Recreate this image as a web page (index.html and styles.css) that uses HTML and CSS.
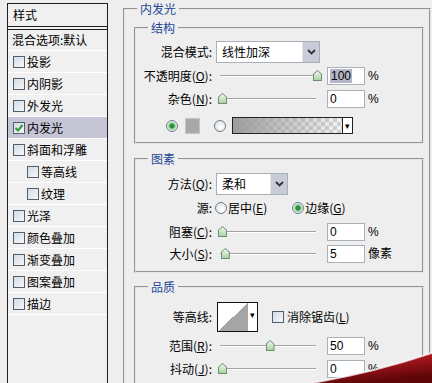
FILE: index.html
```html
<!DOCTYPE html>
<html lang="zh-CN">
<head>
    <meta charset="UTF-8">
    <title>图层样式 - 内发光</title>
    <link rel="stylesheet" href="styles.css">
</head>
<body>
    <div class="dialog">
        <div class="styles">
            <div class="styles-head">样式</div>
            <div class="styles-blend">混合选项:默认</div>
            <ul class="styles-list">
                <li><span class="cb"></span>投影</li>
                <li><span class="cb"></span>内阴影</li>
                <li><span class="cb"></span>外发光</li>
                <li class="on"><span class="cb"><svg class="tick" width="10" height="10" viewBox="0 0 10 10"><path d="M1.5 5 L4 7.5 L8.5 2" fill="none" stroke="#2f9a3c" stroke-width="2"/></svg></span>内发光</li>
                <li><span class="cb"></span>斜面和浮雕</li>
                <li class="sub"><span class="cb"></span>等高线</li>
                <li class="sub"><span class="cb"></span>纹理</li>
                <li><span class="cb"></span>光泽</li>
                <li><span class="cb"></span>颜色叠加</li>
                <li><span class="cb"></span>渐变叠加</li>
                <li><span class="cb"></span>图案叠加</li>
                <li><span class="cb"></span>描边</li>
            </ul>
        </div>

        <fieldset class="group outer">
            <legend>内发光</legend>

            <fieldset class="group inner g-struct">
                <legend>结构</legend>
                <div class="row r-mode">
                    <span class="lbl">混合模式:</span>
                    <div class="select w-mode"><span class="sel-text">线性加深</span><span class="drop"><svg width="9" height="6" viewBox="0 0 9 6"><path d="M1 1 L4.5 4.5 L8 1" fill="none" stroke="#333" stroke-width="1.8"/></svg></span></div>
                </div>
                <div class="row r-opacity">
                    <span class="lbl">不透明度(<u>O</u>):</span>
                    <div class="slider"><span class="thumb" style="--v:100"></span></div>
                    <div class="num"><span class="hl">100</span></div>
                    <span class="unit">%</span>
                </div>
                <div class="row r-noise">
                    <span class="lbl">杂色(<u>N</u>):</span>
                    <div class="slider"><span class="thumb" style="--v:0"></span></div>
                    <div class="num">0</div>
                    <span class="unit">%</span>
                </div>
                <div class="row r-color">
                    <span class="radio checked"></span>
                    <span class="swatch"></span>
                    <span class="radio r-second"></span>
                    <div class="gradient"><span class="grad-fill"></span><span class="grad-drop">&#9662;</span></div>
                </div>
            </fieldset>

            <fieldset class="group inner g-elem">
                <legend>图素</legend>
                <div class="row r-method">
                    <span class="lbl">方法(<u>Q</u>):</span>
                    <div class="select w-method"><span class="sel-text">柔和</span><span class="drop"><svg width="9" height="6" viewBox="0 0 9 6"><path d="M1 1 L4.5 4.5 L8 1" fill="none" stroke="#333" stroke-width="1.8"/></svg></span></div>
                </div>
                <div class="row r-source">
                    <span class="lbl">源:</span>
                    <span class="radio"></span>
                    <span class="opt">居中(<u>E</u>)</span>
                    <span class="radio checked r-edge"></span>
                    <span class="opt">边缘(<u>G</u>)</span>
                </div>
                <div class="row r-choke">
                    <span class="lbl">阻塞(<u>C</u>):</span>
                    <div class="slider"><span class="thumb" style="--v:0"></span></div>
                    <div class="num">0</div>
                    <span class="unit">%</span>
                </div>
                <div class="row r-size">
                    <span class="lbl">大小(<u>S</u>):</span>
                    <div class="slider"><span class="thumb" style="--v:3"></span></div>
                    <div class="num">5</div>
                    <span class="unit">像素</span>
                </div>
            </fieldset>

            <fieldset class="group inner g-quality">
                <legend>品质</legend>
                <div class="row r-contour">
                    <span class="lbl">等高线:</span>
                    <div class="contour"><span class="curve"></span><span class="contour-drop">&#9662;</span></div>
                    <span class="cb cb-aa"></span>
                    <span class="opt">消除锯齿(<u>L</u>)</span>
                </div>
                <div class="row r-range">
                    <span class="lbl">范围(<u>R</u>):</span>
                    <div class="slider"><span class="thumb" style="--v:50"></span></div>
                    <div class="num">50</div>
                    <span class="unit">%</span>
                </div>
                <div class="row r-jitter">
                    <span class="lbl">抖动(<u>J</u>):</span>
                    <div class="slider"><span class="thumb" style="--v:0"></span></div>
                    <div class="num">0</div>
                    <span class="unit">%</span>
                </div>
            </fieldset>
        </fieldset>

        <svg class="swoosh" width="120" height="40" viewBox="0 0 120 40">
            <defs>
                <linearGradient id="red" x1="0" y1="0" x2="0.4" y2="1">
                    <stop offset="0" stop-color="#c4232a"/>
                    <stop offset="0.5" stop-color="#a0141a"/>
                    <stop offset="1" stop-color="#5e0608"/>
                </linearGradient>
            </defs>
            <path d="M0 40 Q 60 30 120 10 L120 40 Z" fill="url(#red)"/>
            <path d="M0 40 Q 60 30 120 10" fill="none" stroke="#fff" stroke-opacity="0.7" stroke-width="2"/>
        </svg>
    </div>
</body>
</html>
```

FILE: styles.css
```css
body {
    margin: 0;
    background: #eeeeee;
    font-family: "Noto Sans CJK SC", "Noto Sans", sans-serif;
    font-size: 12px;
    line-height: 16px;
    color: #000;
    overflow: hidden;
}

.dialog {
    position: relative;
    display: flex;
    align-items: flex-start;
    width: 432px;
    height: 383px;
    overflow: hidden;
}

/* left list of styles */
.styles {
    flex: none;
    width: 99px;
    height: 400px;
    margin: 3px 0 0 7px;
    border: 1px solid #1e1e1e;
    border-bottom: 0;
    background: #f0f0f0;
}

.styles-head {
    height: 22px;
    line-height: 22px;
    padding-left: 5px;
    border-bottom: 1px solid #1e1e1e;
}

.styles-blend {
    height: 20px;
    line-height: 20px;
    margin-top: 2px;
    padding-left: 4px;
    border-top: 1px solid #1e1e1e;
    border-bottom: 1px solid #fff;
}

.styles-list {
    list-style: none;
    margin: 0;
    padding: 0;
}

.styles-list li {
    display: flex;
    align-items: center;
    gap: 2px;
    height: 21px;
    padding-left: 5px;
    border-bottom: 1px solid #fff;
}

.styles-list li.sub {
    padding-left: 19px;
}

.styles-list li.on {
    background: #c5c5d5;
}

.cb {
    flex: none;
    position: relative;
    width: 10px;
    height: 10px;
    border: 1px solid #4f5f70;
    background: linear-gradient(135deg, #d2dbe4, #f6f8fa);
}

.cb .tick {
    position: absolute;
    left: 0;
    top: 0;
}

/* group boxes */
.group {
    margin: 0;
    padding: 0;
    min-width: 0;
    border: 2px groove #e6e6e6;
}

.group legend {
    margin-left: 12px;
    padding: 0 3px;
    color: #1d4796;
    line-height: 16px;
}

.outer {
    flex: none;
    width: 304px;
    height: 420px;
    margin: 1px 0 0 15px;
}

.inner {
    width: 286px;
    margin: 3px 0 0 9px;
    padding-bottom: 8px;
}

.g-elem {
    margin-top: 7px;
}

.g-quality {
    margin-top: 6px;
    padding-bottom: 20px;
}

/* rows */
.row {
    display: flex;
    align-items: center;
    height: 18px;
}

.lbl {
    flex: none;
    width: 76px;
    margin-right: 4px;
    text-align: right;
    white-space: nowrap;
}

.r-mode { height: 22px; margin-top: 5px; }
.r-opacity { margin-top: 4px; }
.r-noise { margin-top: 5px; }
.r-color { height: 17px; margin-top: 9px; }

.r-method { height: 22px; margin-top: 6px; }
.r-source { height: 16px; margin-top: 5px; }
.r-choke { margin-top: 7px; }
.r-size { margin-top: 4px; }

.r-contour { height: 30px; margin-top: 7px; }
.r-range { margin-top: 5px; }
.r-jitter { margin-top: 5px; }

/* dropdown */
.select {
    flex: none;
    display: flex;
    height: 22px;
    box-sizing: border-box;
    border: 1px solid #a9b0ba;
    background: #fff;
}

.w-mode { width: 104px; }
.w-method { width: 72px; }

.sel-text {
    padding-left: 5px;
    line-height: 20px;
}

.drop {
    display: flex;
    align-items: center;
    justify-content: center;
    width: 16px;
    margin-left: auto;
    background: #c8cbd8;
    border-left: 1px solid #e4e6ee;
}

/* slider */
.slider {
    flex: none;
    position: relative;
    width: 106px;
    height: 18px;
}

.slider::before {
    content: "";
    position: absolute;
    left: 4px;
    right: 6px;
    top: 8px;
    border-top: 1px solid #a2a2a2;
    border-bottom: 1px solid #fff;
}

.thumb {
    position: absolute;
    top: 3px;
    left: calc(2px + var(--v) * 0.95px);
    width: 9px;
    height: 11px;
    background: linear-gradient(#6f8f72, #6f8f72);
    clip-path: polygon(50% 0, 100% 36%, 100% 100%, 0 100%, 0 36%);
}

.thumb::after {
    content: "";
    position: absolute;
    left: 1px;
    top: 1px;
    width: 7px;
    height: 9px;
    background: linear-gradient(#f2f8ef, #a9d3a4);
    clip-path: polygon(50% 0, 100% 35%, 100% 100%, 0 100%, 0 35%);
}

/* number fields */
.num {
    flex: none;
    width: 38px;
    height: 18px;
    box-sizing: border-box;
    margin-left: 5px;
    padding-left: 2px;
    border: 1px solid #a9b0ba;
    background: #fff;
    font-family: "Liberation Sans", Arial, sans-serif;
    font-size: 12px;
    line-height: 16px;
}

.num .hl {
    background: #b4b6c8;
    padding: 0 1px;
}

.unit {
    margin-left: 3px;
    font-family: "Liberation Sans", "Noto Sans CJK SC", sans-serif;
}

/* radios and colour row */
.radio {
    flex: none;
    width: 12px;
    height: 12px;
    box-sizing: border-box;
    border: 1px solid #6f7d8b;
    border-radius: 50%;
    background: radial-gradient(circle at 60% 60%, #fff, #d6dee4);
}

.radio.checked {
    background: radial-gradient(circle, #2f8d3e 0 2px, #8fd09a 3px, #eef4ef 5px);
}

.r-color .radio {
    margin-left: 30px;
}

.r-color .r-second {
    margin-left: 14px;
}

.swatch {
    flex: none;
    width: 15px;
    height: 16px;
    margin-left: 7px;
    box-sizing: border-box;
    border: 1px solid #c4c4c4;
    background: #a8a8a8;
}

.gradient {
    flex: none;
    display: flex;
    width: 121px;
    height: 17px;
    margin-left: 6px;
    box-sizing: border-box;
    border: 1px solid #222;
    background: #fff;
}

.grad-fill {
    flex: 1;
    background:
        linear-gradient(to right, #9c9c9c, rgba(170, 170, 170, 0)),
        repeating-conic-gradient(#d0d0d0 0 25%, #f4f4f4 0 50%) 0 0 / 8px 8px;
}

.grad-drop {
    width: 9px;
    border-left: 1px solid #222;
    font-size: 9px;
    line-height: 15px;
    text-align: center;
}

.r-source .radio {
    margin-left: -1px;
}

.r-source .r-edge {
    margin-left: 25px;
}

.opt {
    margin-left: 1px;
    white-space: nowrap;
}

/* contour picker */
.contour {
    flex: none;
    display: flex;
    width: 41px;
    height: 30px;
    margin-left: 1px;
    box-sizing: border-box;
    border: 1px solid #111;
    background: #fff;
}

.curve {
    width: 30px;
    background: linear-gradient(to top left, #a5a5a5 50%, #fff 50%);
}

.contour-drop {
    flex: 1;
    font-size: 9px;
    line-height: 24px;
    text-align: center;
}

.cb-aa {
    margin-left: 14px;
}

.r-contour .opt {
    margin-left: 3px;
}

.swoosh {
    position: absolute;
    right: 0;
    bottom: 0;
}
```
